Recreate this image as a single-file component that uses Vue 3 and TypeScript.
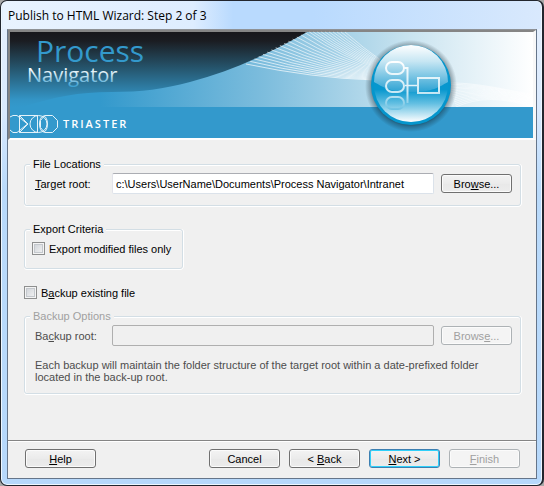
<script setup lang="ts">
import { ref } from 'vue'

interface Line { d: string; o: number }

const target = ref<string>('c:\\Users\\UserName\\Documents\\Process Navigator\\Intranet')
const modifiedOnly = ref<boolean>(false)
const backup = ref<boolean>(false)
const backupRoot = ref<string>('')

// Fan of fine lines between the wave edge and the emblem
const mesh: Line[] = Array.from({ length: 25 }, (_, i) => {
  const t = i / 24
  const k = Math.min(1, t / 0.6)
  const sx = t <= 0.6 ? 246 + 61 * k : 307 + 38 * ((t - 0.6) / 0.4)
  const sy = t <= 0.6 ? 64 - 32 * Math.pow(k, 0.94) : 32
  const ex = 374 + 8 * t
  const ey = 80 - 19 * t
  const cx = sx + (ex - sx) * 0.52
  const cy = ey - (ey - sy) * (0.12 + 0.3 * t)
  return { d: `M${sx} ${sy} Q${cx} ${cy} ${ex} ${ey}`, o: 0.85 - 0.2 * t }
})

const tail: Line[] = Array.from({ length: 15 }, (_, i) => {
  const t = i / 14
  return {
    d: `M${448 + t * 8} ${83 + t * 24} Q${474 + 14 * t} ${82 + 10 * t} 533 ${95 + 12 * t}`,
    o: 0.75,
  }
})
</script>

<template>
  <main class="window">
    <h1 class="title">Publish to HTML Wizard: Step 2 of 3</h1>
    <form class="client" @submit.prevent>
      <header class="banner">
        <svg viewBox="10 32 523 106" role="img" aria-label="Process Navigator, Triaster">
          <defs>
            <linearGradient id="night" x1="0" y1="0" x2="0" y2="1">
              <stop offset="0" stop-color="#17171b" />
              <stop offset=".12" stop-color="#1b1d22" />
              <stop offset=".5" stop-color="#265871" />
              <stop offset=".9" stop-color="#3394c5" />
              <stop offset="1" stop-color="#3399cc" />
            </linearGradient>
            <linearGradient id="sky" gradientUnits="userSpaceOnUse" x1="100" y1="0" x2="533" y2="0">
              <stop offset="0" stop-color="#3399cc" />
              <stop offset=".38" stop-color="#7dbddd" />
              <stop offset=".72" stop-color="#cae4f0" />
              <stop offset="1" stop-color="#fff" />
            </linearGradient>
            <linearGradient id="name" gradientUnits="userSpaceOnUse" x1="0" y1="65" x2="0" y2="86">
              <stop offset=".15" stop-color="#fff" />
              <stop offset=".5" stop-color="#c4e1ef" />
              <stop offset="1" stop-color="#3ea1d2" />
            </linearGradient>
            <linearGradient id="ball" x1="0" y1="0" x2="0" y2="1">
              <stop offset="0" stop-color="#0097cf" />
              <stop offset=".56" stop-color="#0797ce" />
              <stop offset=".75" stop-color="#63bfe2" />
              <stop offset="1" stop-color="#fff" />
            </linearGradient>
            <linearGradient id="gloss" x1="0" y1="0" x2="0" y2="1">
              <stop offset="0" stop-color="#fff" />
              <stop offset=".35" stop-color="#c6e6f3" />
              <stop offset="1" stop-color="#2ba2d3" />
            </linearGradient>
            <radialGradient id="shade">
              <stop offset=".78" stop-color="#12242e" stop-opacity=".8" />
              <stop offset=".88" stop-color="#12242e" stop-opacity=".35" />
              <stop offset="1" stop-color="#12242e" stop-opacity="0" />
            </radialGradient>
            <linearGradient id="fade" gradientUnits="userSpaceOnUse" x1="0" y1="62" x2="0" y2="112">
              <stop offset="0" stop-color="#fff" />
              <stop offset=".6" stop-color="#c9e9f5" />
              <stop offset="1" stop-color="#62bde0" />
            </linearGradient>
          </defs>
          <rect x="10" y="32" width="523" height="75" fill="url(#night)" />
          <path d="M22 107 C55 97 78 92 112 92 C142 92 163 89 190 82 C232 71 268 54 307 32 H533 V107 Z" fill="url(#sky)" />
          <g fill="none" stroke="#fff">
            <path v-for="(l, i) in mesh" :key="'m' + i" :d="l.d" :stroke-opacity="l.o" stroke-width=".8" />
            <path v-for="(l, i) in tail" :key="'t' + i" :d="l.d" :stroke-opacity="l.o" stroke-width=".7" />
          </g>
          <rect x="10" y="107" width="523" height="31" fill="#3399cc" />

          <text class="process" x="36" y="62">Process</text>
          <text class="navigator" x="27" y="82" fill="url(#name)">Navigator</text>

          <g fill="none" stroke="#e4f2f9" stroke-width="1">
            <path d="M10 117 L13 115.500 H17 L27.500 124 L17 132.500 H13 L10 130" />
            <path d="M38 115.500 H19.500 V132.500 H38 M19.500 115.500 L28 124 L19.500 132.500" />
            <circle cx="38.500" cy="124" r="8.500" />
            <path d="M37.500 115.500 V132.500" />
            <ellipse cx="43.500" cy="124" rx="4" ry="8" />
            <path d="M44.500 115.500 H52.500 L57.500 120.500 V127.500 L52.500 132.500 H44.500 L40.500 127.500 V120.500 Z" />
          </g>
          <text class="brand" x="63" y="128">TRIASTER</text>

          <circle cx="411" cy="86" r="46" fill="url(#shade)" />
          <circle cx="411" cy="85" r="40" fill="#0596cd" />
          <circle cx="411" cy="85" r="37" fill="url(#ball)" />
          <path d="M374 82 A37 37 0 0 1 448 82 C439 87 433 92 411 92 C389 92 383 87 374 82 Z" fill="url(#gloss)" />
          <g fill="none" stroke="url(#fade)" stroke-width="2">
            <rect x="386" y="62" width="18" height="12" rx="6" />
            <rect x="386" y="80" width="18" height="12" rx="6" />
            <rect x="386" y="97" width="18" height="12" rx="6" />
            <path d="M404 68 H407.500 V103" />
            <rect x="418" y="78" width="21" height="15" />
          </g>
          <path d="M405 85.500 H417" stroke="#e3f3fa" stroke-width="1.500" />
        </svg>
      </header>

      <div class="body">
        <fieldset>
          <legend>File Locations</legend>
          <div class="row">
            <label for="target"><u>T</u>arget root:</label>
            <input id="target" v-model="target" class="box" type="text" />
            <button type="button">Bro<u>w</u>se...</button>
          </div>
        </fieldset>

        <fieldset class="criteria">
          <legend>Export Criteria</legend>
          <label class="check"><input v-model="modifiedOnly" type="checkbox" />Export modified files only</label>
        </fieldset>

        <label class="check backup"><input v-model="backup" type="checkbox" /><span>B<u>a</u>ckup existing file</span></label>

        <fieldset class="options">
          <legend>Backup Options</legend>
          <div class="row">
            <label for="backup-root">Ba<u>c</u>kup root:</label>
            <input id="backup-root" v-model="backupRoot" class="box" type="text" :disabled="!backup" />
            <button type="button" :disabled="!backup">Brows<u>e</u>...</button>
          </div>
          <p>Each backup will maintain the folder structure of the target root within a date-prefixed folder located in the back-up root.</p>
        </fieldset>
      </div>

      <footer>
        <button type="button" class="help"><u>H</u>elp</button>
        <button type="button">Cancel</button>
        <button type="button">&lt; <u>B</u>ack</button>
        <button type="submit" class="primary"><u>N</u>ext &gt;</button>
        <button type="button" disabled><u>F</u>inish</button>
      </footer>
    </form>
  </main>
</template>

<style>
body {
  background: #a9a9a9;
}
</style>

<style scoped>
* {
  box-sizing: border-box;
}

.window {
  display: flex;
  flex-direction: column;
  min-height: 100vh;
  padding: 0 5px 6px 6px;
  border: 1px solid #22262e;
  border-right-width: 2px;
  border-radius: 7px;
  background: linear-gradient(#e6f0fd 0, #d9e9fd 110px, #b9dafb 190px, #b6d8fb 100%);
  box-shadow: inset 0 0 0 1px #eef7ff;
  font: 11px/12px "Liberation Sans", Arial, sans-serif;
  color: #000;
}

.title {
  margin: 0 -4px;
  padding: 6px 5px 5px;
  border-radius: 6px 6px 0 0;
  background: linear-gradient(90deg, #e9f3ff 0, #deedff 190px, #b9dafe 230px, #b9dafe 310px, #d9e9fd 100%);
  font: 12px/17px "Open Sans", "Noto Sans", sans-serif;
}

.client {
  display: flex;
  flex: 1;
  flex-direction: column;
  border: 1px solid #65758a;
  border-top-color: #8f9296;
  background: #f0f0f0;
}

.banner {
  border: solid;
  border-width: 2px 3px 2px 2px;
  border-color: #858585 #f8f8f8 #fff #858585;
}

.banner svg {
  display: block;
  width: 100%;
  height: auto;
  overflow: visible;
}

.process {
  fill: #3399cc;
  font: 30px "Open Sans", "Noto Sans", sans-serif;
}

.navigator {
  font: 500 20px "Open Sans", "Noto Sans", sans-serif;
}

.brand {
  fill: #fff;
  font: 600 11px "Open Sans", "Noto Sans", sans-serif;
  letter-spacing: 2px;
}

.body {
  flex: 1;
  padding: 18px 15px 0 16px;
}

fieldset {
  min-width: 0;
  margin: 0 0 17px;
  padding: 3px 8px 11px 10px;
  border: 1px solid #d3dee5;
  border-radius: 3px;
  box-shadow: inset 0 1px #fff, inset 1px 0 #fff, 0 1px #fff, 1px 0 #fff;
}

legend {
  margin-left: -5px;
  padding: 0 3px;
  background: #f0f0f0;
}

.row {
  display: flex;
  align-items: center;
}

.row label {
  width: 77px;
}

.box {
  flex: 1;
  min-width: 0;
  height: 21px;
  margin: 0 7px 0 0;
  padding: 0 3px;
  border: 1px solid #dbe2ea;
  border-top-color: #abadb3;
  border-left-color: #e2e3ea;
  border-radius: 2px;
  background: #fff;
  font: inherit;
  color: inherit;
}

.box:disabled {
  border-color: #afafaf;
  background: #f0f0f0;
}

button {
  width: 71px;
  height: 19px;
  padding: 0;
  border: 1px solid #707070;
  border-radius: 3px;
  background: linear-gradient(#f3f3f3, #ebebeb 50%, #e8e8e8 50%, #ececec);
  box-shadow: inset 0 0 0 1px #fbfbfb;
  font: inherit;
  color: #000;
}

button:disabled {
  border-color: #adb2b5;
  background: #f4f4f4;
  color: #a0a0a0;
}

.primary {
  border-color: #3c7fb1;
  box-shadow: inset 0 0 0 1px #2fd0fa;
}

.check {
  display: flex;
  align-items: center;
  gap: 4px;
}

.check input {
  appearance: none;
  width: 13px;
  height: 13px;
  margin: 0;
  border: 1px solid #8e8f8f;
  background: linear-gradient(135deg, #cbcfd5, #f6f6f6);
  box-shadow: inset 0 0 0 1px #f4f4f4, inset 0 0 0 2px #c4c8cd;
}

.check input:checked {
  background: #4b6097;
}

.criteria {
  width: 159px;
  padding: 7px 8px 13px 7px;
}

.criteria legend {
  margin-left: -2px;
}

.backup {
  width: max-content;
  margin-bottom: 11px;
}

.options {
  margin: 0;
  padding-bottom: 10px;
  color: #4d4d4d;
}

.options legend {
  color: #a0a0a0;
}

.options p {
  margin: 13px 28px 0 0;
}

footer {
  display: flex;
  gap: 9px;
  padding: 8px 16px 10px 17px;
  border-top: 1px solid #858585;
  box-shadow: inset 0 1px #fff;
}

.help {
  margin-right: auto;
}
</style>
